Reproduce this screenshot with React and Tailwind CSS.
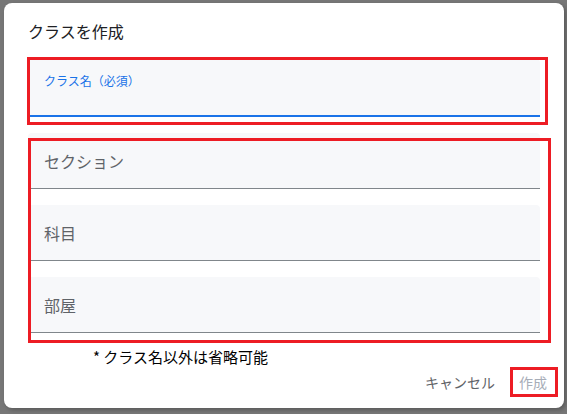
import React from 'react';

const font = { fontFamily: '"Noto Sans CJK JP", "Noto Sans", sans-serif' };

const Field = ({ label }) => (
  <div className="h-14 bg-[#f7f8fa] rounded-t border-b border-[#80868b] flex items-center px-4">
    <span className="text-base leading-6 text-[#5f6368]">{label}</span>
  </div>
);

const App = () => {
  return (
    <div className="w-[567px] h-[414px] bg-[#777777] pt-[3px] pl-1" style={font}>
      <div className="relative w-[560px] h-[405px] bg-white rounded-lg shadow-[2px_2px_4px_rgba(0,0,0,0.25)] flex flex-col px-6 pt-4">
        <h2 className="text-base leading-6 text-[#202124]">クラスを作成</h2>

        <div className="mt-4 h-[58px] bg-[#f7f8fa] rounded-t border-b-2 border-[#1a73e8] px-4 pt-2">
          <span className="text-xs leading-4 text-[#1a73e8]">クラス名（必須）</span>
        </div>

        <div className="mt-4 flex flex-col gap-4">
          <Field label="セクション" />
          <Field label="科目" />
          <Field label="部屋" />
        </div>

        <p className="mt-[14px] ml-[65px] text-[15px] leading-5 text-black">* クラス名以外は省略可能</p>

        <div className="flex justify-end gap-2 -mr-[15px] mt-[3px]">
          <button className="px-2 h-6 text-sm text-[#5f6368]">キャンセル</button>
          <button className="px-2 h-6 text-sm text-[#a7adb8]">作成</button>
        </div>

        <div className="absolute left-[23px] top-[54px] w-[521px] h-[68px] border-[3px] border-[#ed1c24]" />
        <div className="absolute left-6 top-[135px] w-[523px] h-[205px] border-[3px] border-[#ed1c24]" />
        <div className="absolute left-[506px] top-[364px] w-12 h-[30px] border-[3px] border-[#ed1c24]" />
      </div>
    </div>
  );
};

export default App;
